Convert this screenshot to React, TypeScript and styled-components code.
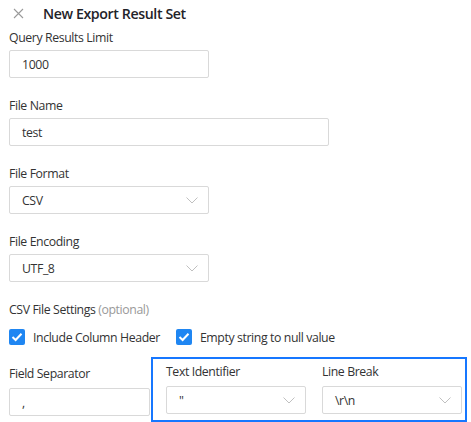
import React from "react";
import styled, { createGlobalStyle } from "styled-components";

const Global = createGlobalStyle`
  html, body { margin: 0; padding: 0; background: #fff; }
  body { font-family: "Open Sans", "Noto Sans", sans-serif; color: #333; }
  * { box-sizing: border-box; }
`;

const Page = styled.div`
  width: 471px;
  height: 422px;
  overflow: hidden;
  padding: 0 9px;
`;

const Header = styled.div`
  height: 26px;
  display: flex;
  align-items: center;
  padding-left: 4px;
  gap: 19px;
`;

const Title = styled.div`
  font-size: 14.2px;
  font-weight: 600;
  letter-spacing: -0.4px;
  color: #1f2329;
`;

const Field = styled.div<{ $w?: number; $mb?: number }>`
  width: ${(p) => (p.$w ? `${p.$w}px` : "auto")};
  margin-bottom: ${(p) => (p.$mb ?? 16)}px;
  &:first-of-type { margin-top: 2px; }
`;

const textStyle = `
  font-size: 12.3px;
  letter-spacing: -0.4px;
  color: #333;
`;

const Label = styled.div<{ $tight?: boolean }>`
  ${textStyle}
  line-height: ${(p) => (p.$tight ? 20 : 24)}px;
  margin-bottom: ${(p) => (p.$tight ? 4 : 0)}px;
  white-space: nowrap;
`;

const Optional = styled.span`
  color: #999;
`;

const Box = styled.div`
  ${textStyle}
  height: 28px;
  border: 1px solid #d9d9d9;
  border-radius: 2px;
  display: flex;
  align-items: center;
  justify-content: space-between;
  padding: 0 10px 0 12px;
  background: #fff;
`;

const SectionLabel = styled(Label)`
  margin-top: 18px;
  line-height: 20px;
  margin-bottom: 4px;
`;

const CheckRow = styled.div`
  height: 26px;
  display: flex;
  align-items: center;
  gap: 16px;
`;

const Check = styled.label`
  ${textStyle}
  display: flex;
  align-items: center;
  gap: 8px;
`;

const CheckBox = styled.span`
  width: 16px;
  height: 16px;
  border-radius: 2px;
  background: #1f86f2;
  display: flex;
  align-items: center;
  justify-content: center;
`;

const Bottom = styled.div`
  position: relative;
  margin-top: 12px;
  display: grid;
  grid-template-columns: 141px 140px 140px;
  column-gap: 16px;
`;

const Highlight = styled.div`
  position: absolute;
  left: 142px;
  top: -5px;
  width: 316px;
  height: 65px;
  border: 2px solid #1677ff;
  pointer-events: none;
`;

const Chevron = () => (
  <svg width="12" height="7" viewBox="0 0 12 7">
    <polyline points="0.5,0.5 6,6 11.5,0.5" fill="none" stroke="#c0c0c0" strokeWidth="1" />
  </svg>
);

const Close = () => (
  <svg width="11" height="11" viewBox="0 0 11 11">
    <path d="M1 1L10 10M10 1L1 10" stroke="#9a9a9a" strokeWidth="1.1" />
  </svg>
);

const Tick = () => (
  <svg width="12" height="10" viewBox="0 0 12 10">
    <polyline points="1.5,5 4.6,8 10.5,1.8" fill="none" stroke="#fff" strokeWidth="2" />
  </svg>
);

export default function App() {
  return (
    <>
      <Global />
      <Page>
        <Header>
          <Close />
          <Title>New Export Result Set</Title>
        </Header>
        <Field $w={200}>
          <Label>Query Results Limit</Label>
          <Box>1000</Box>
        </Field>
        <Field $w={320}>
          <Label>File Name</Label>
          <Box>test</Box>
        </Field>
        <Field $w={200}>
          <Label>File Format</Label>
          <Box>
            CSV
            <Chevron />
          </Box>
        </Field>
        <Field $w={200} $mb={0}>
          <Label>File Encoding</Label>
          <Box>
            UTF_8
            <Chevron />
          </Box>
        </Field>
        <SectionLabel>
          CSV File Settings <Optional>(optional)</Optional>
        </SectionLabel>
        <CheckRow>
          <Check>
            <CheckBox>
              <Tick />
            </CheckBox>
            Include Column Header
          </Check>
          <Check>
            <CheckBox>
              <Tick />
            </CheckBox>
            Empty string to null value
          </Check>
        </CheckRow>
        <Bottom>
          <Field $mb={0}>
            <Label $tight>Field Separator</Label>
            <Box>,</Box>
          </Field>
          <Field $mb={0}>
            <Label $tight>Text Identifier</Label>
            <Box>
              "
              <Chevron />
            </Box>
          </Field>
          <Field $mb={0}>
            <Label $tight>Line Break</Label>
            <Box>
              \r\n
              <Chevron />
            </Box>
          </Field>
          <Highlight />
        </Bottom>
      </Page>
    </>
  );
}
